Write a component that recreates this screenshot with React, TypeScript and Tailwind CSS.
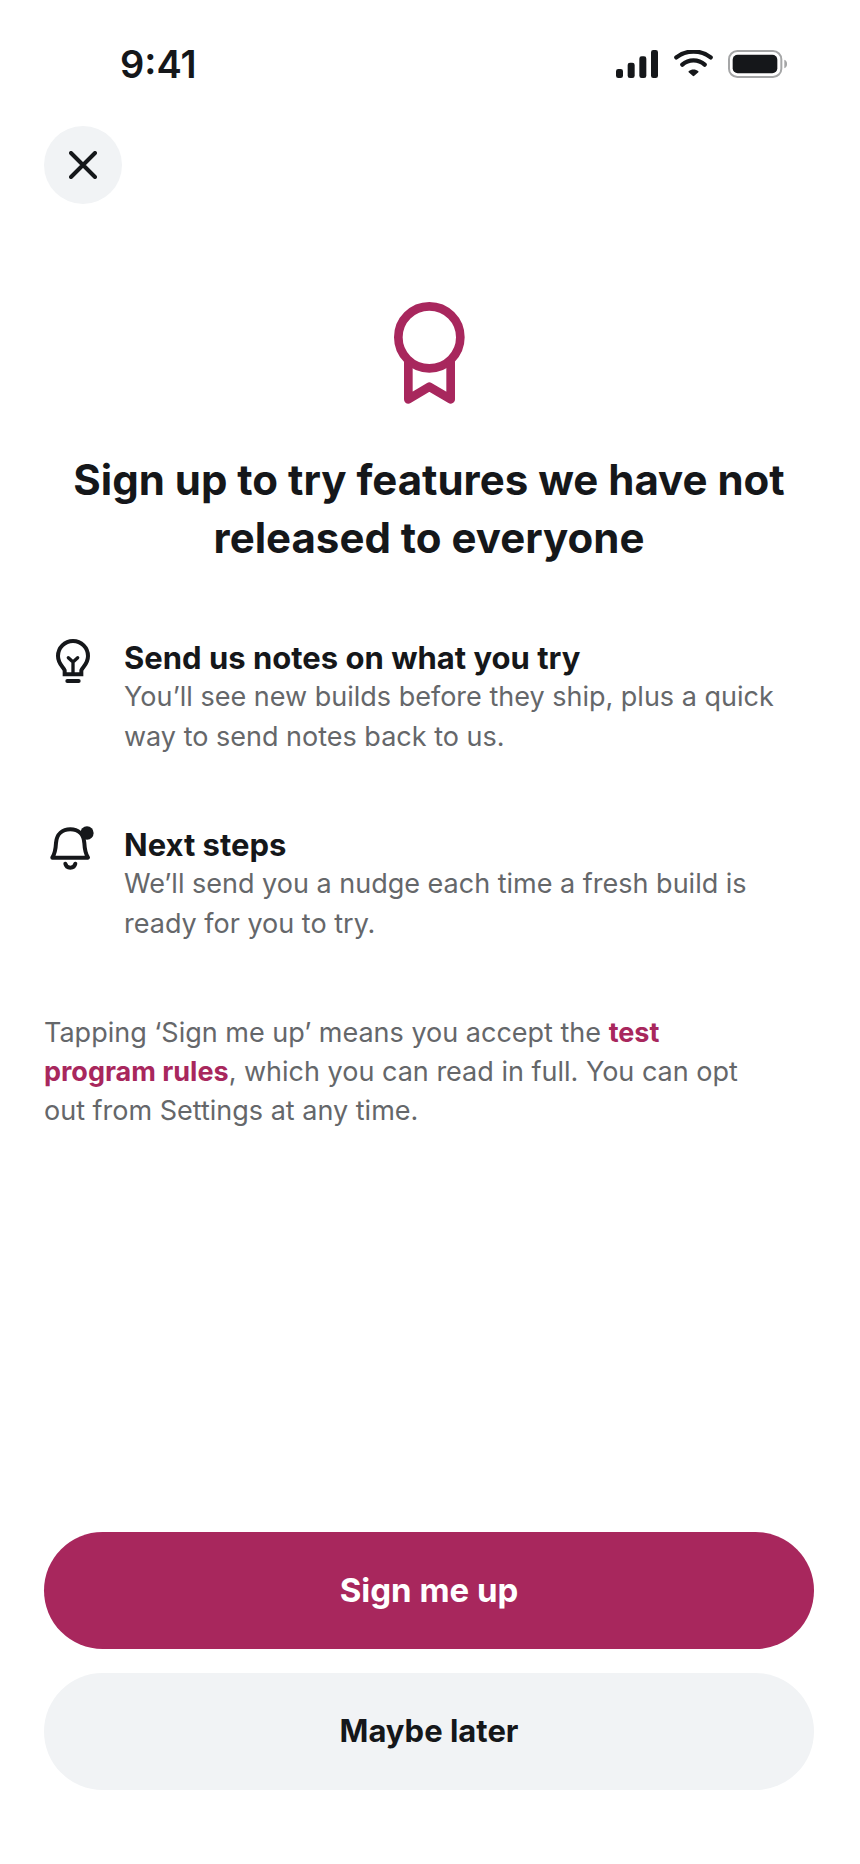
import type { ReactNode } from "react";

const features = [
  {
    title: "Send us notes on what you try",
    body: "You’ll see new builds before they ship, plus a quick way to send notes back to us.",
    icon: <BulbIcon />,
  },
  {
    title: "Next steps",
    body: "We’ll send you a nudge each time a fresh build is ready for you to try.",
    icon: <BellIcon />,
  },
];

function BulbIcon() {
  return (
    <svg viewBox="0 0 132 132" className="size-11" fill="none" stroke="currentColor" strokeWidth="12" strokeLinecap="round" strokeLinejoin="round" aria-hidden="true">
      <path d="M44 106V94C41 84 24 76 24 51a45 45 0 0 1 90 0c0 25-17 33-20 43v12z" strokeLinejoin="miter" />
      <path d="M69 104V70M55 56l14 13 14-13" strokeWidth="10" />
      <path d="M52 126h34" />
    </svg>
  );
}

function BellIcon() {
  return (
    <svg viewBox="0 0 132 132" className="size-11" fill="none" stroke="currentColor" strokeWidth="12" strokeLinecap="round" strokeLinejoin="round" aria-hidden="true">
      <path d="M7 95c8-13 10-24 11-44C20 24 38 10 61 10s40 14 42 41c1 20 3 31 11 44z" />
      <path d="M46 113c3 16 27 16 30 0" />
      <circle cx="111" cy="21" r="20" fill="currentColor" stroke="none" />
    </svg>
  );
}

function AwardIcon() {
  return (
    <svg viewBox="0 0 213 306" className="h-[102px] w-[71px]" fill="none" stroke="currentColor" strokeWidth="26" strokeLinejoin="round" aria-hidden="true">
      <circle cx="106" cy="106" r="93" />
      <path d="M43 176v116l63-38 64 38V176" />
    </svg>
  );
}

function StatusIcons() {
  return (
    <div className="flex items-center" aria-hidden="true">
      <svg viewBox="0 0 126 84" className="h-7 w-[42px]" fill="currentColor">
        <rect x="0" y="57" width="21" height="27" rx="7" />
        <rect x="35" y="38" width="21" height="46" rx="7" />
        <rect x="70" y="19" width="21" height="65" rx="7" />
        <rect x="105" y="0" width="21" height="84" rx="7" />
      </svg>
      <svg viewBox="0 0 117 84" className="ml-4 h-7 w-[39px]" fill="none" stroke="currentColor" strokeWidth="13" strokeLinecap="round">
        <path d="M7 22C36-1 81-1 110 22M25 44c19-17 48-17 67 0" />
        <path d="M44 64c8-7 21-7 29 0 1 1 1 2 0 3L60 78q-1 1-3 0L44 67c-1-1-1-2 0-3z" fill="currentColor" stroke="none" />
      </svg>
      <svg viewBox="0 0 177 84" className="ml-[15px] h-7 w-[59px]">
        <rect x="3" y="3" width="157" height="78" rx="25" fill="none" stroke="#a5a6a7" strokeWidth="6" />
        <rect x="14" y="14" width="134" height="56" rx="15" fill="currentColor" />
        <path d="M169 29c11 4 11 22 0 26z" fill="#a5a6a7" />
      </svg>
    </div>
  );
}

function Feature({ icon, title, children }: { icon: ReactNode; title: string; children: ReactNode }) {
  return (
    <li className="flex gap-[30px]">
      <div className="ml-[6px] shrink-0">{icon}</div>
      <div className="flex-1">
        <h2 className="text-[31px] leading-[38px] font-bold">{title}</h2>
        <p className="text-[27px] leading-[40px] text-[#65676a]">{children}</p>
      </div>
    </li>
  );
}

export default function App() {
  return (
    <div className="flex min-h-screen flex-col bg-white pb-[74px] font-['Inter',sans-serif] text-[#15171a]">
      <header className="flex items-center justify-between pt-[42px] pr-[73px] pl-[120px]">
        <time className="text-[38px] leading-[44px] font-semibold">9:41</time>
        <StatusIcons />
      </header>

      <main className="flex flex-1 flex-col pt-10 pr-[46px] pl-11">
        <button type="button" aria-label="Close" className="flex size-[78px] items-center justify-center rounded-full bg-[#f1f3f5]">
          <svg viewBox="0 0 28 28" className="size-7" stroke="currentColor" strokeWidth="4" strokeLinecap="round" aria-hidden="true">
            <path d="M2 2l24 24M26 2L2 26" />
          </svg>
        </button>

        <div className="mt-[98px] flex justify-center text-[#a8275d]">
          <AwardIcon />
        </div>
        <h1 className="mt-[47px] text-center text-[42px] leading-[58px] font-bold">
          Sign up to try features we have not released to everyone
        </h1>

        <ul className="mt-[72px] flex flex-col gap-[69px]">
          {features.map((feature) => (
            <Feature key={feature.title} icon={feature.icon} title={feature.title}>
              {feature.body}
            </Feature>
          ))}
        </ul>

        <p className="mt-[69px] pr-10 text-[27px] leading-[39px] text-[#65676a]">
          Tapping ‘Sign me up’ means you accept the{" "}
          <a href="#rules" className="font-bold text-[#a8275d]">
            test program rules
          </a>
          , which you can read in full. You can opt out from Settings at any time.
        </p>

        <div className="mt-auto flex flex-col gap-6 pt-10">
          <button type="button" className="h-[117px] rounded-full bg-[#a8275d] text-[33px] font-bold text-white">
            Sign me up
          </button>
          <button type="button" className="h-[117px] rounded-full bg-[#f1f3f5] text-[31px] font-bold">
            Maybe later
          </button>
        </div>
      </main>
    </div>
  );
}
